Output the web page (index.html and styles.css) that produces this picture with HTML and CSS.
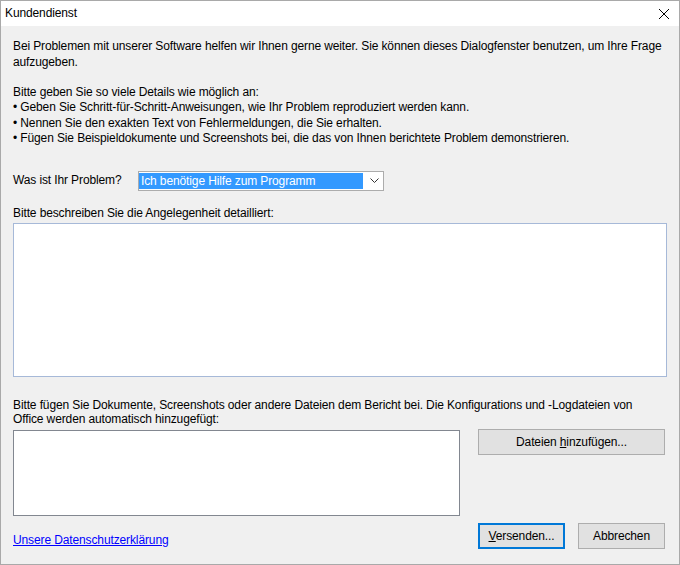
FILE: index.html
```html
<!DOCTYPE html>
<html lang="de">
<head>
<meta charset="utf-8">
<title>Kundendienst</title>
<link rel="stylesheet" href="styles.css">
</head>
<body>
<div class="window">
  <div class="titlebar">
    <span class="title">Kundendienst</span>
    <svg class="close" width="12" height="12" viewBox="0 0 12 12"><path d="M1 1 L11 11 M11 1 L1 11" stroke="#000" stroke-width="1" fill="none"/></svg>
  </div>
  <div class="content">
    <p class="intro">Bei Problemen mit unserer Software helfen wir Ihnen gerne weiter. Sie können dieses Dialogfenster benutzen, um Ihre Frage<br>aufzugeben.</p>
    <p class="details">Bitte geben Sie so viele Details wie möglich an:<br>• Geben Sie Schritt-für-Schritt-Anweisungen, wie Ihr Problem reproduziert werden kann.<br>• Nennen Sie den exakten Text von Fehlermeldungen, die Sie erhalten.<br>• Fügen Sie Beispieldokumente und Screenshots bei, die das von Ihnen berichtete Problem demonstrieren.</p>
    <div class="problem-row">
      <span class="label">Was ist Ihr Problem?</span>
      <div class="select">
        <span class="selected">Ich benötige Hilfe zum Programm</span>
        <svg class="chevron" width="9" height="5" viewBox="0 0 9 5"><path d="M0.5 0.5 L4.5 4.5 L8.5 0.5" stroke="#333" stroke-width="1" fill="none"/></svg>
      </div>
    </div>
    <div class="label desc-label">Bitte beschreiben Sie die Angelegenheit detailliert:</div>
    <div class="textbox"></div>
    <div class="label attach-label">Bitte fügen Sie Dokumente, Screenshots oder andere Dateien dem Bericht bei. Die Konfigurations und -Logdateien von<br>Office werden automatisch hinzugefügt:</div>
    <div class="attach-row">
      <div class="listbox"></div>
      <button class="btn add-btn">Dateien <u>h</u>inzufügen...</button>
    </div>
    <div class="footer">
      <a class="privacy" href="#">Unsere Datenschutzerklärung</a>
      <div class="actions">
        <button class="btn primary"><u>V</u>ersenden...</button>
        <button class="btn">Abbrechen</button>
      </div>
    </div>
  </div>
</div>
</body>
</html>
```
FILE: styles.css
```css
html, body {
  margin: 0;
  padding: 0;
  background: #f0f0f0;
}
.window {
  width: 678px;
  height: 563px;
  border: 1px solid #a9a9a9;
  background: #f0f0f0;
  font-family: "Liberation Sans", Arial, sans-serif;
  font-size: 12px;
  line-height: 15px;
  letter-spacing: -0.12px;
  color: #000;
  display: flex;
  flex-direction: column;
}
.titlebar {
  height: 25px;
  background: #fff;
  display: flex;
  align-items: center;
  justify-content: space-between;
  padding: 0 9px 0 4px;
  flex: none;
}
.title {
  font-size: 12px;
}
.close {
  display: block;
  margin-top: 1px;
}
.content {
  padding: 0 12px;
  display: flex;
  flex-direction: column;
}
p {
  margin: 0;
  white-space: nowrap;
}
.intro {
  margin-top: 12px;
  line-height: 16px;
}
.details {
  margin-top: 15px;
  line-height: 15.4px;
}
.problem-row {
  display: flex;
  align-items: center;
  margin-top: 24px;
  height: 20px;
}
.problem-row .label {
  width: 125px;
  flex: none;
}
.select {
  box-sizing: border-box;
  width: 246px;
  height: 20px;
  border: 1px solid #acacac;
  background: #fff;
  display: flex;
  align-items: center;
  padding: 0;
}
.selected {
  background: #3399ff;
  color: #fff;
  width: 224px;
  height: 16px;
  line-height: 16px;
  padding-left: 2px;
  box-sizing: border-box;
}
.chevron {
  margin-left: 7px;
}
.desc-label {
  margin-top: 15px;
}
.textbox {
  margin-top: 2px;
  height: 152px;
  border: 1px solid #a6b9d8;
  background: #fff;
}
.attach-label {
  margin-top: 21px;
  line-height: 14.5px;
  white-space: nowrap;
}
.attach-row {
  display: flex;
  align-items: flex-start;
  margin-top: 3px;
}
.listbox {
  width: 445px;
  height: 84px;
  border: 1px solid #828790;
  background: #fff;
  flex: none;
}
.btn {
  font-family: "Liberation Sans", Arial, sans-serif;
  font-size: 12px;
  letter-spacing: -0.12px;
  color: #000;
  background: #e1e1e1;
  border: 1px solid #adadad;
  height: 26px;
  padding: 0;
  margin: 0;
  box-sizing: border-box;
}
.add-btn {
  margin-left: 18px;
  margin-top: -1px;
  width: 187px;
}
.footer {
  display: flex;
  justify-content: space-between;
  align-items: center;
  margin-top: 7px;
}
.privacy {
  color: #0000ff;
  text-decoration: underline;
  margin-top: 9px;
}
.actions {
  display: flex;
  gap: 13px;
  margin-right: 2px;
}
.actions .btn {
  width: 87px;
}
.btn.primary {
  border: 2px solid #0078d7;
}
```
